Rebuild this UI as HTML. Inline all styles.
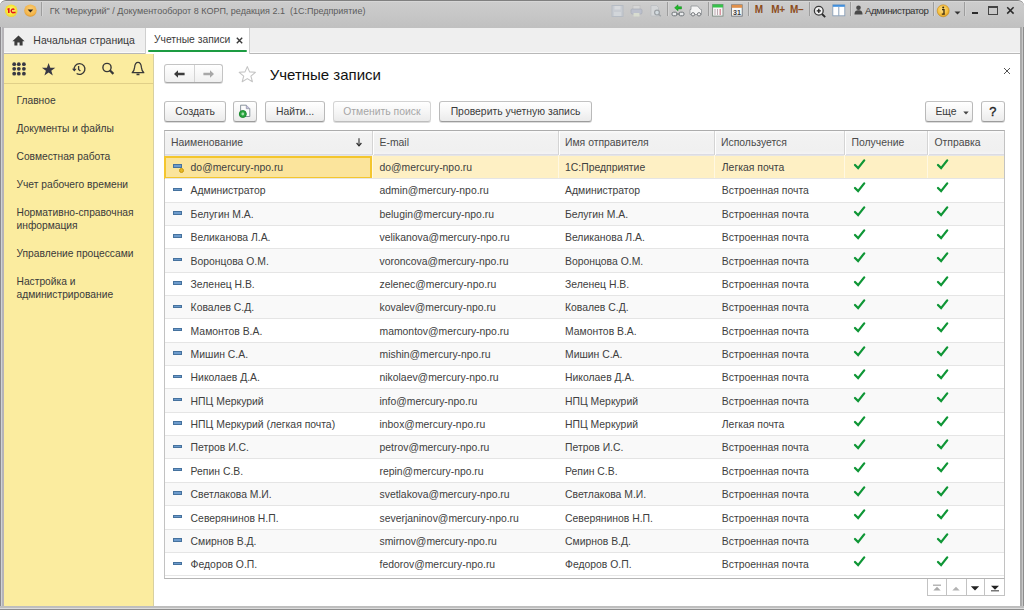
<!DOCTYPE html>
<html><head><meta charset="utf-8">
<style>
*{box-sizing:border-box;margin:0;padding:0}
html,body{width:1024px;height:610px;overflow:hidden;background:#a6a6a6;font-family:"Liberation Sans",sans-serif;color:#444}
.abs{position:absolute}
.t{position:absolute;white-space:nowrap;line-height:12px}
#title{left:0;top:0;width:1024px;height:28px;background:linear-gradient(#cdcdcd,#c7c7c7 50%,#c0c0c0);border-top:1px solid #808080;border-radius:6px 6px 0 0;box-shadow:inset 0 1px 0 #d6d6d6}
#tabs{left:3.5px;top:27.5px;width:1016.5px;height:26.5px;background:#efefef;border-bottom:1px solid #b8b8b8}
#side{left:3.5px;top:54px;width:150px;height:552px;background:#fbec9f;border-right:1px solid #d8d0a0}
#main{left:153.5px;top:54px;width:866.5px;height:552px;background:#fff}
.hdr{background:linear-gradient(#fbfbfb,#f2f2f2 3px,#f0f0f0 20px,#f4f4f6);border-bottom:1px solid #dcdce4}
.hsep{width:1px;background:#d4d4d4;box-shadow:1px 0 0 #fff}
.htx{font-size:10.4px;color:#4a4a4a}
.rtx{font-size:10.4px;color:#404040}
.selc{background:#fbe49c;border:2px solid #f4c62e}
.ic{width:9px;height:3.4px;background:#6d9bcc;border:0.8px solid #46729e}
.gold{width:5.2px;height:5.2px;border-radius:50%;background:#e6b726;border:1px solid #c8980e}
.btn{position:absolute;height:20.4px;border:1px solid #b9b9b9;border-top-color:#c2c2c2;border-bottom-color:#9c9c9c;border-radius:3px;background:linear-gradient(#ffffff,#f6f6f6 50%,#ebebeb);box-shadow:0 1px 0 #dcdcdc;font-size:10.4px;color:#3b3b3b;text-align:center;line-height:20.6px;white-space:nowrap}
.side-t{position:absolute;left:16.5px;font-size:10.25px;color:#3a3a3a;white-space:nowrap;line-height:12.4px}
</style></head><body>
<div class="abs" style="left:0;top:0;width:12px;height:10px;background:#fff"></div>
<div class="abs" style="left:1012px;top:0;width:12px;height:10px;background:#fff"></div>
<div id="title" class="abs"></div>

<svg class="abs" style="left:4px;top:3.5px" width="15" height="14" viewBox="0 0 15 14"><defs><radialGradient id="g1" cx="50%" cy="45%" r="55%"><stop offset="0" stop-color="#fffa90"/><stop offset="0.65" stop-color="#f8e838"/><stop offset="1" stop-color="#ead040"/></radialGradient></defs><circle cx="7.2" cy="6.8" r="6.3" fill="url(#g1)"/><path d="M3.5 5.5 L4.8 5 V8.9" stroke="#e5141a" stroke-width="1.6" fill="none"/><path d="M10.3 5.7 A1.75 1.75 0 1 0 9.6 8.5 H11.6" stroke="#e5141a" stroke-width="1.5" fill="none"/></svg>
<svg class="abs" style="left:22.5px;top:3.5px" width="15" height="14" viewBox="0 0 15 14"><defs><radialGradient id="g2" cx="50%" cy="40%" r="60%"><stop offset="0" stop-color="#fbd27a"/><stop offset="0.75" stop-color="#f3b44a"/><stop offset="1" stop-color="#d9962e"/></radialGradient></defs><circle cx="7.4" cy="6.6" r="6.2" fill="url(#g2)"/><path d="M4.6 5.4 H10.2 L7.4 8.6 Z" fill="#2b2118"/></svg>
<div class="abs" style="left:41px;top:1.5px;width:1px;height:14.5px;background:#9d9d9d;box-shadow:1px 0 0 #d4d4d4"></div>
<svg class="abs" style="left:611px;top:4.5px" width="13" height="12" viewBox="0 0 13 12"><rect x="1" y="0.5" width="11" height="11" fill="#c8ccd2" stroke="#b6bcc4"/><rect x="3.5" y="1" width="6" height="3.5" fill="#d8dadd"/><rect x="3" y="7" width="7" height="4" fill="#d2d6da"/></svg>
<svg class="abs" style="left:630px;top:4.5px" width="13" height="12" viewBox="0 0 13 12"><rect x="3" y="0.5" width="7" height="4" fill="#d6d6d6" stroke="#bdbdbd" stroke-width="0.6"/><rect x="1" y="4" width="11" height="5" rx="1.2" fill="#bcc0cc" stroke="#a8acb6" stroke-width="0.7"/><rect x="3.5" y="8" width="6" height="3.5" fill="#d8dcd0"/></svg>
<svg class="abs" style="left:649.5px;top:4.5px" width="12" height="12" viewBox="0 0 12 12"><path d="M1 0.5 H6.5 L8.5 2.5 V11 H1 Z" fill="#d4d6d8" stroke="#b8bcc0" stroke-width="0.7"/><circle cx="7" cy="7.6" r="2.4" fill="#d2dadf" stroke="#9da2a6" stroke-width="1.2"/><path d="M8.7 9.3 L10.8 11.2" stroke="#9da2a6" stroke-width="1.4"/></svg>
<div class="abs" style="left:666.6px;top:1.5px;width:1px;height:14.5px;background:#9d9d9d;box-shadow:1px 0 0 #d4d4d4"></div>
<svg class="abs" style="left:671px;top:3.5px" width="14" height="13" viewBox="0 0 14 13"><path d="M7 0.8 L3.6 3.8 L7 6.8 V4.9 H10.5 V2.7 H7 Z" fill="#1fb82a" stroke="#128a1a" stroke-width="0.5"/><rect x="1" y="8.2" width="5" height="3.6" rx="1.6" fill="#e8eaec" stroke="#6e7478" stroke-width="1"/><rect x="8" y="8.2" width="5" height="3.6" rx="1.6" fill="#e8eaec" stroke="#6e7478" stroke-width="1"/><path d="M5 10 H9" stroke="#6e7478" stroke-width="1"/></svg>
<svg class="abs" style="left:688.5px;top:4.5px" width="14" height="12" viewBox="0 0 14 12"><path d="M2 1 H8.5 L11.5 4.5 H12.5 V9.5 H1 V4.5 H2 Z" fill="#f4f4f4" stroke="#8e9296" stroke-width="0.8"/><circle cx="4" cy="9.3" r="1.7" fill="#eee" stroke="#6e7276" stroke-width="0.9"/><circle cx="10" cy="9.3" r="1.7" fill="#eee" stroke="#6e7276" stroke-width="0.9"/></svg>
<div class="abs" style="left:707.7px;top:1.5px;width:1px;height:14.5px;background:#9d9d9d;box-shadow:1px 0 0 #d4d4d4"></div>
<svg class="abs" style="left:711.5px;top:3.8px" width="12" height="13" viewBox="0 0 12 13"><rect x="0.6" y="0.5" width="10.4" height="11.6" fill="#f6f6f6" stroke="#7c8a80" stroke-width="0.9"/><rect x="0.6" y="0.5" width="10.4" height="3" fill="#36c24a"/><path d="M3 5 V11 M5.5 5 V11 M8.2 5 V11" stroke="#b8a0a8" stroke-width="0.9"/><path d="M8.2 5 V11" stroke="#e07a8a" stroke-width="0.9"/></svg>
<svg class="abs" style="left:730.5px;top:3.8px" width="12" height="13" viewBox="0 0 12 13"><rect x="0.6" y="0.8" width="10.6" height="11.3" fill="#fafafa" stroke="#6e747a" stroke-width="0.9"/><rect x="0.6" y="0.8" width="10.6" height="3" fill="#e0904a"/><text x="5.9" y="10.8" font-family="Liberation Sans" font-size="7.2" font-weight="bold" fill="#3c3c3c" text-anchor="middle">31</text></svg>
<div class="abs" style="left:748px;top:1.5px;width:1px;height:14.5px;background:#9d9d9d;box-shadow:1px 0 0 #d4d4d4"></div>
<div class="t" style="left:754.8px;top:4.3px;font-size:10px;font-weight:bold;color:#8c4c1c;line-height:11px">M</div>
<div class="t" style="left:771.3px;top:4.3px;font-size:10px;font-weight:bold;color:#8c4c1c;line-height:11px;letter-spacing:-0.3px">M+</div>
<div class="t" style="left:790px;top:4.3px;font-size:10px;font-weight:bold;color:#8c4c1c;line-height:11px;letter-spacing:-0.3px">M&#8211;</div>
<div class="abs" style="left:809.3px;top:1.5px;width:1px;height:14.5px;background:#9d9d9d;box-shadow:1px 0 0 #d4d4d4"></div>
<svg class="abs" style="left:812.5px;top:5px" width="14" height="13" viewBox="0 0 14 13"><circle cx="5.8" cy="5.8" r="4.4" fill="#f0f0f0" stroke="#3a3a3a" stroke-width="1.3"/><path d="M3.7 5.8 H7.9 M5.8 3.7 V7.9" stroke="#222" stroke-width="1.3"/><path d="M9 9 L12.2 12.2" stroke="#2a2a2a" stroke-width="1.8"/></svg>
<svg class="abs" style="left:831.5px;top:3.8px" width="14" height="13" viewBox="0 0 14 13"><rect x="0.8" y="0.8" width="12" height="11" fill="#fff" stroke="#8aa0b8" stroke-width="0.9"/><rect x="0.8" y="0.8" width="12" height="2" fill="#3f8edc"/><path d="M6.8 3 V11.8" stroke="#8aa0b8" stroke-width="1"/></svg>
<div class="abs" style="left:849.8px;top:1.5px;width:1px;height:14.5px;background:#9d9d9d;box-shadow:1px 0 0 #d4d4d4"></div>
<svg class="abs" style="left:854px;top:4.8px" width="9" height="10" viewBox="0 0 9 10"><circle cx="4.5" cy="2.8" r="2.3" fill="#4a4a4a"/><path d="M0.5 9.5 C0.5 6 2 5.2 4.5 5.2 C7 5.2 8.5 6 8.5 9.5 Z" fill="#4a4a4a"/></svg>
<div class="t" style="left:865px;top:4.5px;font-size:9.6px;color:#303030;line-height:11px;letter-spacing:-0.45px">Администратор</div>
<div class="abs" style="left:932.6px;top:1.5px;width:1px;height:14.5px;background:#9d9d9d;box-shadow:1px 0 0 #d4d4d4"></div>
<svg class="abs" style="left:935.5px;top:3.6px" width="15" height="14" viewBox="0 0 15 14"><defs><radialGradient id="g3" cx="45%" cy="40%" r="60%"><stop offset="0" stop-color="#fde08a"/><stop offset="0.7" stop-color="#f5bf3c"/><stop offset="1" stop-color="#d99a20"/></radialGradient></defs><circle cx="7.2" cy="6.8" r="6" fill="url(#g3)" stroke="#c88a1a" stroke-width="0.6"/><circle cx="7.2" cy="3.6" r="1" fill="#3a2a10"/><path d="M6 5.6 H8 V10.2 H8.8 M5.8 10.2 H8.6" stroke="#3a2a10" stroke-width="1.3" fill="none"/></svg>
<svg class="abs" style="left:953.8px;top:11.2px" width="7" height="4" viewBox="0 0 7 4"><path d="M0.5 0.5 H6.5 L3.5 3.5 Z" fill="#333"/></svg>
<div class="abs" style="left:964px;top:1.5px;width:1px;height:14.5px;background:#9d9d9d;box-shadow:1px 0 0 #d4d4d4"></div>
<div class="abs" style="left:971.6px;top:11.8px;width:6.8px;height:1.9px;background:#2a2a2a"></div>
<div class="abs" style="left:987.5px;top:6px;width:10px;height:9px;border:1.3px solid #444;border-top-width:2px"></div>
<svg class="abs" style="left:1006.3px;top:5.9px" width="9" height="9" viewBox="0 0 9 9"><path d="M1.2 1.2 L7.6 7.6 M7.6 1.2 L1.2 7.6" stroke="#2a2a2a" stroke-width="1.5"/></svg>

<div class="t" style="left:49.7px;top:5px;font-size:9px;color:#5c5c5c;line-height:12px">ГК "Меркурий" / Документооборот 8 КОРП, редакция 2.1&nbsp; (1С:Предприятие)</div>
<div class="abs" style="left:0;top:27px;width:3.5px;height:583px;background:linear-gradient(90deg,#8c8a8e 0,#8c8a8e 1px,#d0d2d4 1px,#d0d2d4 2px,#b6b4b8 2px)"></div>
<div class="abs" style="left:1020px;top:27px;width:4px;height:583px;background:linear-gradient(90deg,#a8a8a8 0,#acacac 2px,#c8c8c8 2px,#c8c8c8 3px,#8c8c8c 3px)"></div>
<div id="tabs" class="abs"></div>
<div class="abs" style="left:3.5px;top:52px;width:1016.5px;height:1px;background:#fafafa"></div>
<div class="abs" style="left:145.4px;top:28px;width:104.4px;height:25.5px;background:#fff;border-left:1px solid #cfcfcf;border-right:1px solid #cfcfcf"></div>
<div class="abs" style="left:148px;top:50.2px;width:99px;height:2.1px;background:#1d9c42;border-radius:1px"></div>
<svg class="abs" style="left:12px;top:34.5px" width="13" height="11" viewBox="0 0 13 11"><path d="M6.5 0.6 L12.6 6.2 H10.6 V10.6 H7.6 V7.4 H5.4 V10.6 H2.4 V6.2 H0.4 Z" fill="#3c3c3c"/></svg>
<div class="t" style="left:33.3px;top:33.5px;font-size:10.5px;color:#3a3a3a">Начальная страница</div>
<div class="t" style="left:154px;top:34.4px;font-size:10.3px;color:#3a3a3a">Учетные записи</div>
<svg class="abs" style="left:236.3px;top:37px" width="7" height="7" viewBox="0 0 7 7"><path d="M0.8 0.8 L6.2 6.2 M6.2 0.8 L0.8 6.2" stroke="#3a3a3a" stroke-width="1.4"/></svg>
<div id="side" class="abs"></div>
<div class="abs" style="left:3.5px;top:83px;width:149.5px;height:1px;background:#e0cf88"></div>

<svg class="abs" style="left:10px;top:60px" width="18" height="18" viewBox="0 0 18 18">
<g fill="#383844"><circle cx="4.2" cy="4.2" r="1.9"/><circle cx="8.8" cy="4.2" r="1.9"/><circle cx="13.9" cy="4.2" r="1.9"/><circle cx="4.2" cy="8.8" r="1.9"/><circle cx="8.8" cy="8.8" r="1.9"/><circle cx="13.9" cy="8.8" r="1.9"/><circle cx="4.2" cy="13.7" r="1.9"/><circle cx="8.8" cy="13.7" r="1.9"/><circle cx="13.9" cy="13.7" r="1.9"/></g></svg>
<svg class="abs" style="left:40px;top:61px" width="17" height="16" viewBox="0 0 17 16"><path d="M8.6 2.0 L10.3 6.8 L15.3 6.8 L11.3 9.8 L12.8 14.6 L8.6 11.6 L4.4 14.6 L5.9 9.8 L1.9 6.8 L6.9 6.8 Z" fill="#383844"/></svg>
<svg class="abs" style="left:70.5px;top:61px" width="16" height="16" viewBox="0 0 16 16"><path d="M3.3 9.3 A5.4 5.4 0 1 1 5.6 12.5" fill="none" stroke="#383838" stroke-width="1.3"/><path d="M1 7.8 L3.4 10.6 L5.6 7.8 Z" fill="#383844"/><path d="M7.6 5 V8.4 L9.4 10" fill="none" stroke="#383838" stroke-width="1.3"/></svg>
<svg class="abs" style="left:99px;top:60px" width="17" height="17" viewBox="0 0 17 17"><circle cx="8" cy="7.5" r="4.1" fill="none" stroke="#383838" stroke-width="1.4"/><path d="M10.8 10.3 L14.4 13.9" stroke="#383838" stroke-width="2.2"/></svg>
<svg class="abs" style="left:129px;top:60px" width="18" height="18" viewBox="0 0 18 18"><path d="M3.2 12.7 H14.8 C13.1 11.1 12.6 9.6 12.4 7.4 C12.2 4.4 10.9 2.3 9 2.3 C7.1 2.3 5.8 4.4 5.6 7.4 C5.4 9.6 4.9 11.1 3.2 12.7 Z" fill="none" stroke="#383838" stroke-width="1.25" stroke-linejoin="round"/><path d="M7.5 14.4 H10.5" stroke="#383838" stroke-width="1.7"/></svg>

<div class="side-t" style="top:94.8px">Главное</div>
<div class="side-t" style="top:122.8px">Документы и файлы</div>
<div class="side-t" style="top:150.8px">Совместная работа</div>
<div class="side-t" style="top:178.8px">Учет рабочего времени</div>
<div class="side-t" style="top:207.3px">Нормативно-справочная<br>информация</div>
<div class="side-t" style="top:248.3px">Управление процессами</div>
<div class="side-t" style="top:276.3px">Настройка и<br>администрирование</div>
<div id="main" class="abs"></div>
<div class="abs" style="left:164px;top:63.9px;width:58.5px;height:19px;border:1px solid #c4c4c4;border-bottom-color:#a8a8a8;border-radius:3px;background:linear-gradient(#fff,#f0f0f0);box-shadow:0 1px 0 #dcdcdc"></div>
<div class="abs" style="left:193.5px;top:64.5px;width:1px;height:17.5px;background:#d4d4d4"></div>
<svg class="abs" style="left:173px;top:69px" width="13" height="10" viewBox="0 0 13 10"><path d="M1 5 L5 1.2 V3.8 H11.6 V6.2 H5 V8.8 Z" fill="#3c3c3c"/></svg>
<svg class="abs" style="left:201.5px;top:69px" width="13" height="10" viewBox="0 0 13 10"><path d="M12 5 L8 1.2 V3.8 H1.4 V6.2 H8 V8.8 Z" fill="#a8a8a8"/></svg>
<svg class="abs" style="left:236.5px;top:65px" width="21" height="19" viewBox="0 0 21 19"><path d="M10.3 1.6 L12.6 6.9 L18.4 7.3 L13.9 11.1 L15.4 16.7 L10.3 13.6 L5.2 16.7 L6.7 11.1 L2.2 7.3 L8 6.9 Z" fill="#fff" stroke="#c4c4c4" stroke-width="1.1" stroke-linejoin="round"/></svg>
<div class="t" style="left:269.7px;top:66.2px;font-size:15px;color:#111;line-height:17px">Учетные записи</div>
<svg class="abs" style="left:1002.6px;top:66.8px" width="8" height="8" viewBox="0 0 8 8"><path d="M1 1 L7 7 M7 1 L1 7" stroke="#555" stroke-width="1"/></svg>
<div class="btn" style="left:164.2px;top:101.3px;width:61.8px">Создать</div>
<div class="btn" style="left:233.1px;top:101.3px;width:24.3px"></div>
<svg class="abs" style="left:238px;top:104px" width="14" height="14" viewBox="0 0 14 14"><path d="M2.6 1.2 H8.3 L11.8 4.7 V12.5 H2.6 Z" fill="#fcfcfc" stroke="#7e8a94" stroke-width="0.9"/><path d="M8.3 1.2 V4.7 H11.8" fill="#c8c0e0" stroke="#8890a0" stroke-width="0.7"/><circle cx="4.8" cy="10" r="3.5" fill="#2aa640" stroke="#1c8a30" stroke-width="1"/><circle cx="4.8" cy="10" r="1.4" fill="#a6e0ae"/></svg>
<div class="btn" style="left:264.7px;top:101.3px;width:60.8px">Найти...</div>
<div class="btn" style="left:332.5px;top:101.3px;width:98.7px;color:#a6a6a6;border-color:#d4d4d4;border-bottom-color:#bdbdbd">Отменить поиск</div>
<div class="btn" style="left:439.1px;top:101.3px;width:153px">Проверить учетную запись</div>
<div class="btn" style="left:924.6px;top:101.3px;width:48.6px;text-align:left;padding-left:9.8px;line-height:20.4px">Еще</div>
<svg class="abs" style="left:963px;top:110.5px" width="6" height="4" viewBox="0 0 6 4"><path d="M0.3 0.5 H5.7 L3 3.5 Z" fill="#444"/></svg>
<div class="btn" style="left:980.7px;top:101.3px;width:24px;font-size:12.8px;color:#222;line-height:20px;-webkit-text-stroke:0.35px #222">?</div>
<div class="abs" style="left:153.5px;top:127.5px;width:866.5px;height:0px"></div>
<div class="abs" style="left:163.8px;top:129.8px;width:841.5px;height:448.78px;border:1px solid #c2c2c2;border-top-color:#acacac;border-bottom-color:#b4b4b4;background:#fff"></div>
<div class="abs hdr" style="left:164.8px;top:130.8px;width:839.5px;height:24px"></div>
<div class="t htx" style="left:171px;top:136.8px">Наименование</div>
<div class="t htx" style="left:379.5px;top:136.8px">E-mail</div>
<div class="t htx" style="left:565px;top:136.8px">Имя отправителя</div>
<div class="t htx" style="left:721px;top:136.8px">Используется</div>
<div class="t htx" style="left:851.5px;top:136.8px">Получение</div>
<div class="t htx" style="left:934.5px;top:136.8px">Отправка</div>
<div class="abs hsep" style="left:372px;top:130.8px;height:24px"></div>
<div class="abs hsep" style="left:558px;top:130.8px;height:24px"></div>
<div class="abs hsep" style="left:714px;top:130.8px;height:24px"></div>
<div class="abs hsep" style="left:844px;top:130.8px;height:24px"></div>
<div class="abs hsep" style="left:927px;top:130.8px;height:24px"></div>
<svg class="abs" style="left:354.5px;top:137.8px" width="8" height="9" viewBox="0 0 8 9"><path d="M4 0.3 V7.5" stroke="#2c2c2c" stroke-width="1.1"/><path d="M1.6 5 L4 7.8 L6.4 5" fill="none" stroke="#2c2c2c" stroke-width="1.2"/></svg>
<div class="abs" style="left:164.8px;top:154.8px;width:839.5px;height:23.36px;background:#fef0c4;border-top:1px solid #e5e5e5"></div>
<div class="abs selc" style="left:163.8px;top:155.9px;width:208.2px;height:23.26px"></div>
<div class="abs" style="left:372px;top:154.8px;width:1px;height:23.36px;background:#fff8e2"></div>
<div class="abs" style="left:558px;top:154.8px;width:1px;height:23.36px;background:#fff8e2"></div>
<div class="abs" style="left:714px;top:154.8px;width:1px;height:23.36px;background:#fff8e2"></div>
<div class="abs" style="left:844px;top:154.8px;width:1px;height:23.36px;background:#fff8e2"></div>
<div class="abs" style="left:927px;top:154.8px;width:1px;height:23.36px;background:#fff8e2"></div>
<div class="abs ic" style="left:173px;top:164.4px"></div><div class="abs gold" style="left:178.7px;top:167.9px"></div>
<div class="t rtx" style="left:190.6px;top:162.1px">do@mercury-npo.ru</div>
<div class="t rtx" style="left:379.5px;top:162.1px">do@mercury-npo.ru</div>
<div class="t rtx" style="left:565px;top:162.1px">1С:Предприятие</div>
<div class="t rtx" style="left:721.8px;top:162.1px">Легкая почта</div>
<div class="abs" style="left:852px;top:156.8px;width:15px;height:13px"><svg width="15" height="13" viewBox="0 0 15 13"><path d="M3.0 7.0 L6.1 10.1 L12.2 2.4" fill="none" stroke="#0f9636" stroke-width="2.3" stroke-linecap="round"/></svg></div>
<div class="abs" style="left:935px;top:156.8px;width:15px;height:13px"><svg width="15" height="13" viewBox="0 0 15 13"><path d="M3.0 7.0 L6.1 10.1 L12.2 2.4" fill="none" stroke="#0f9636" stroke-width="2.3" stroke-linecap="round"/></svg></div>
<div class="abs" style="left:164.8px;top:178.16px;width:839.5px;height:23.36px;background:#ffffff;border-top:1px solid #e5e5e5"></div>
<div class="abs ic" style="left:173px;top:187.76px"></div>
<div class="t rtx" style="left:190.6px;top:185.46px">Администратор</div>
<div class="t rtx" style="left:379.5px;top:185.46px">admin@mercury-npo.ru</div>
<div class="t rtx" style="left:565px;top:185.46px">Администратор</div>
<div class="t rtx" style="left:721.8px;top:185.46px">Встроенная почта</div>
<div class="abs" style="left:852px;top:180.16px;width:15px;height:13px"><svg width="15" height="13" viewBox="0 0 15 13"><path d="M3.0 7.0 L6.1 10.1 L12.2 2.4" fill="none" stroke="#0f9636" stroke-width="2.3" stroke-linecap="round"/></svg></div>
<div class="abs" style="left:935px;top:180.16px;width:15px;height:13px"><svg width="15" height="13" viewBox="0 0 15 13"><path d="M3.0 7.0 L6.1 10.1 L12.2 2.4" fill="none" stroke="#0f9636" stroke-width="2.3" stroke-linecap="round"/></svg></div>
<div class="abs" style="left:164.8px;top:201.52px;width:839.5px;height:23.36px;background:#f9f9f9;border-top:1px solid #e5e5e5"></div>
<div class="abs ic" style="left:173px;top:211.12px"></div>
<div class="t rtx" style="left:190.6px;top:208.82px">Белугин М.А.</div>
<div class="t rtx" style="left:379.5px;top:208.82px">belugin@mercury-npo.ru</div>
<div class="t rtx" style="left:565px;top:208.82px">Белугин М.А.</div>
<div class="t rtx" style="left:721.8px;top:208.82px">Встроенная почта</div>
<div class="abs" style="left:852px;top:203.52px;width:15px;height:13px"><svg width="15" height="13" viewBox="0 0 15 13"><path d="M3.0 7.0 L6.1 10.1 L12.2 2.4" fill="none" stroke="#0f9636" stroke-width="2.3" stroke-linecap="round"/></svg></div>
<div class="abs" style="left:935px;top:203.52px;width:15px;height:13px"><svg width="15" height="13" viewBox="0 0 15 13"><path d="M3.0 7.0 L6.1 10.1 L12.2 2.4" fill="none" stroke="#0f9636" stroke-width="2.3" stroke-linecap="round"/></svg></div>
<div class="abs" style="left:164.8px;top:224.88px;width:839.5px;height:23.36px;background:#ffffff;border-top:1px solid #e5e5e5"></div>
<div class="abs ic" style="left:173px;top:234.48px"></div>
<div class="t rtx" style="left:190.6px;top:232.18px">Великанова Л.А.</div>
<div class="t rtx" style="left:379.5px;top:232.18px">velikanova@mercury-npo.ru</div>
<div class="t rtx" style="left:565px;top:232.18px">Великанова Л.А.</div>
<div class="t rtx" style="left:721.8px;top:232.18px">Встроенная почта</div>
<div class="abs" style="left:852px;top:226.88px;width:15px;height:13px"><svg width="15" height="13" viewBox="0 0 15 13"><path d="M3.0 7.0 L6.1 10.1 L12.2 2.4" fill="none" stroke="#0f9636" stroke-width="2.3" stroke-linecap="round"/></svg></div>
<div class="abs" style="left:935px;top:226.88px;width:15px;height:13px"><svg width="15" height="13" viewBox="0 0 15 13"><path d="M3.0 7.0 L6.1 10.1 L12.2 2.4" fill="none" stroke="#0f9636" stroke-width="2.3" stroke-linecap="round"/></svg></div>
<div class="abs" style="left:164.8px;top:248.24px;width:839.5px;height:23.36px;background:#f9f9f9;border-top:1px solid #e5e5e5"></div>
<div class="abs ic" style="left:173px;top:257.84px"></div>
<div class="t rtx" style="left:190.6px;top:255.54px">Воронцова О.М.</div>
<div class="t rtx" style="left:379.5px;top:255.54px">voroncova@mercury-npo.ru</div>
<div class="t rtx" style="left:565px;top:255.54px">Воронцова О.М.</div>
<div class="t rtx" style="left:721.8px;top:255.54px">Встроенная почта</div>
<div class="abs" style="left:852px;top:250.24px;width:15px;height:13px"><svg width="15" height="13" viewBox="0 0 15 13"><path d="M3.0 7.0 L6.1 10.1 L12.2 2.4" fill="none" stroke="#0f9636" stroke-width="2.3" stroke-linecap="round"/></svg></div>
<div class="abs" style="left:935px;top:250.24px;width:15px;height:13px"><svg width="15" height="13" viewBox="0 0 15 13"><path d="M3.0 7.0 L6.1 10.1 L12.2 2.4" fill="none" stroke="#0f9636" stroke-width="2.3" stroke-linecap="round"/></svg></div>
<div class="abs" style="left:164.8px;top:271.6px;width:839.5px;height:23.36px;background:#ffffff;border-top:1px solid #e5e5e5"></div>
<div class="abs ic" style="left:173px;top:281.2px"></div>
<div class="t rtx" style="left:190.6px;top:278.9px">Зеленец Н.В.</div>
<div class="t rtx" style="left:379.5px;top:278.9px">zelenec@mercury-npo.ru</div>
<div class="t rtx" style="left:565px;top:278.9px">Зеленец Н.В.</div>
<div class="t rtx" style="left:721.8px;top:278.9px">Встроенная почта</div>
<div class="abs" style="left:852px;top:273.6px;width:15px;height:13px"><svg width="15" height="13" viewBox="0 0 15 13"><path d="M3.0 7.0 L6.1 10.1 L12.2 2.4" fill="none" stroke="#0f9636" stroke-width="2.3" stroke-linecap="round"/></svg></div>
<div class="abs" style="left:935px;top:273.6px;width:15px;height:13px"><svg width="15" height="13" viewBox="0 0 15 13"><path d="M3.0 7.0 L6.1 10.1 L12.2 2.4" fill="none" stroke="#0f9636" stroke-width="2.3" stroke-linecap="round"/></svg></div>
<div class="abs" style="left:164.8px;top:294.96px;width:839.5px;height:23.36px;background:#f9f9f9;border-top:1px solid #e5e5e5"></div>
<div class="abs ic" style="left:173px;top:304.56px"></div>
<div class="t rtx" style="left:190.6px;top:302.26px">Ковалев С.Д.</div>
<div class="t rtx" style="left:379.5px;top:302.26px">kovalev@mercury-npo.ru</div>
<div class="t rtx" style="left:565px;top:302.26px">Ковалев С.Д.</div>
<div class="t rtx" style="left:721.8px;top:302.26px">Встроенная почта</div>
<div class="abs" style="left:852px;top:296.96px;width:15px;height:13px"><svg width="15" height="13" viewBox="0 0 15 13"><path d="M3.0 7.0 L6.1 10.1 L12.2 2.4" fill="none" stroke="#0f9636" stroke-width="2.3" stroke-linecap="round"/></svg></div>
<div class="abs" style="left:935px;top:296.96px;width:15px;height:13px"><svg width="15" height="13" viewBox="0 0 15 13"><path d="M3.0 7.0 L6.1 10.1 L12.2 2.4" fill="none" stroke="#0f9636" stroke-width="2.3" stroke-linecap="round"/></svg></div>
<div class="abs" style="left:164.8px;top:318.32px;width:839.5px;height:23.36px;background:#ffffff;border-top:1px solid #e5e5e5"></div>
<div class="abs ic" style="left:173px;top:327.92px"></div>
<div class="t rtx" style="left:190.6px;top:325.62px">Мамонтов В.А.</div>
<div class="t rtx" style="left:379.5px;top:325.62px">mamontov@mercury-npo.ru</div>
<div class="t rtx" style="left:565px;top:325.62px">Мамонтов В.А.</div>
<div class="t rtx" style="left:721.8px;top:325.62px">Встроенная почта</div>
<div class="abs" style="left:852px;top:320.32px;width:15px;height:13px"><svg width="15" height="13" viewBox="0 0 15 13"><path d="M3.0 7.0 L6.1 10.1 L12.2 2.4" fill="none" stroke="#0f9636" stroke-width="2.3" stroke-linecap="round"/></svg></div>
<div class="abs" style="left:935px;top:320.32px;width:15px;height:13px"><svg width="15" height="13" viewBox="0 0 15 13"><path d="M3.0 7.0 L6.1 10.1 L12.2 2.4" fill="none" stroke="#0f9636" stroke-width="2.3" stroke-linecap="round"/></svg></div>
<div class="abs" style="left:164.8px;top:341.68px;width:839.5px;height:23.36px;background:#f9f9f9;border-top:1px solid #e5e5e5"></div>
<div class="abs ic" style="left:173px;top:351.28px"></div>
<div class="t rtx" style="left:190.6px;top:348.98px">Мишин С.А.</div>
<div class="t rtx" style="left:379.5px;top:348.98px">mishin@mercury-npo.ru</div>
<div class="t rtx" style="left:565px;top:348.98px">Мишин С.А.</div>
<div class="t rtx" style="left:721.8px;top:348.98px">Встроенная почта</div>
<div class="abs" style="left:852px;top:343.68px;width:15px;height:13px"><svg width="15" height="13" viewBox="0 0 15 13"><path d="M3.0 7.0 L6.1 10.1 L12.2 2.4" fill="none" stroke="#0f9636" stroke-width="2.3" stroke-linecap="round"/></svg></div>
<div class="abs" style="left:935px;top:343.68px;width:15px;height:13px"><svg width="15" height="13" viewBox="0 0 15 13"><path d="M3.0 7.0 L6.1 10.1 L12.2 2.4" fill="none" stroke="#0f9636" stroke-width="2.3" stroke-linecap="round"/></svg></div>
<div class="abs" style="left:164.8px;top:365.04px;width:839.5px;height:23.36px;background:#ffffff;border-top:1px solid #e5e5e5"></div>
<div class="abs ic" style="left:173px;top:374.64px"></div>
<div class="t rtx" style="left:190.6px;top:372.34px">Николаев Д.А.</div>
<div class="t rtx" style="left:379.5px;top:372.34px">nikolaev@mercury-npo.ru</div>
<div class="t rtx" style="left:565px;top:372.34px">Николаев Д.А.</div>
<div class="t rtx" style="left:721.8px;top:372.34px">Встроенная почта</div>
<div class="abs" style="left:852px;top:367.04px;width:15px;height:13px"><svg width="15" height="13" viewBox="0 0 15 13"><path d="M3.0 7.0 L6.1 10.1 L12.2 2.4" fill="none" stroke="#0f9636" stroke-width="2.3" stroke-linecap="round"/></svg></div>
<div class="abs" style="left:935px;top:367.04px;width:15px;height:13px"><svg width="15" height="13" viewBox="0 0 15 13"><path d="M3.0 7.0 L6.1 10.1 L12.2 2.4" fill="none" stroke="#0f9636" stroke-width="2.3" stroke-linecap="round"/></svg></div>
<div class="abs" style="left:164.8px;top:388.4px;width:839.5px;height:23.36px;background:#f9f9f9;border-top:1px solid #e5e5e5"></div>
<div class="abs ic" style="left:173px;top:398px"></div>
<div class="t rtx" style="left:190.6px;top:395.7px">НПЦ Меркурий</div>
<div class="t rtx" style="left:379.5px;top:395.7px">info@mercury-npo.ru</div>
<div class="t rtx" style="left:565px;top:395.7px">НПЦ Меркурий</div>
<div class="t rtx" style="left:721.8px;top:395.7px">Встроенная почта</div>
<div class="abs" style="left:852px;top:390.4px;width:15px;height:13px"><svg width="15" height="13" viewBox="0 0 15 13"><path d="M3.0 7.0 L6.1 10.1 L12.2 2.4" fill="none" stroke="#0f9636" stroke-width="2.3" stroke-linecap="round"/></svg></div>
<div class="abs" style="left:935px;top:390.4px;width:15px;height:13px"><svg width="15" height="13" viewBox="0 0 15 13"><path d="M3.0 7.0 L6.1 10.1 L12.2 2.4" fill="none" stroke="#0f9636" stroke-width="2.3" stroke-linecap="round"/></svg></div>
<div class="abs" style="left:164.8px;top:411.76px;width:839.5px;height:23.36px;background:#ffffff;border-top:1px solid #e5e5e5"></div>
<div class="abs ic" style="left:173px;top:421.36px"></div>
<div class="t rtx" style="left:190.6px;top:419.06px">НПЦ Меркурий (легкая почта)</div>
<div class="t rtx" style="left:379.5px;top:419.06px">inbox@mercury-npo.ru</div>
<div class="t rtx" style="left:565px;top:419.06px">НПЦ Меркурий</div>
<div class="t rtx" style="left:721.8px;top:419.06px">Легкая почта</div>
<div class="abs" style="left:852px;top:413.76px;width:15px;height:13px"><svg width="15" height="13" viewBox="0 0 15 13"><path d="M3.0 7.0 L6.1 10.1 L12.2 2.4" fill="none" stroke="#0f9636" stroke-width="2.3" stroke-linecap="round"/></svg></div>
<div class="abs" style="left:935px;top:413.76px;width:15px;height:13px"><svg width="15" height="13" viewBox="0 0 15 13"><path d="M3.0 7.0 L6.1 10.1 L12.2 2.4" fill="none" stroke="#0f9636" stroke-width="2.3" stroke-linecap="round"/></svg></div>
<div class="abs" style="left:164.8px;top:435.12px;width:839.5px;height:23.36px;background:#f9f9f9;border-top:1px solid #e5e5e5"></div>
<div class="abs ic" style="left:173px;top:444.72px"></div>
<div class="t rtx" style="left:190.6px;top:442.42px">Петров И.С.</div>
<div class="t rtx" style="left:379.5px;top:442.42px">petrov@mercury-npo.ru</div>
<div class="t rtx" style="left:565px;top:442.42px">Петров И.С.</div>
<div class="t rtx" style="left:721.8px;top:442.42px">Встроенная почта</div>
<div class="abs" style="left:852px;top:437.12px;width:15px;height:13px"><svg width="15" height="13" viewBox="0 0 15 13"><path d="M3.0 7.0 L6.1 10.1 L12.2 2.4" fill="none" stroke="#0f9636" stroke-width="2.3" stroke-linecap="round"/></svg></div>
<div class="abs" style="left:935px;top:437.12px;width:15px;height:13px"><svg width="15" height="13" viewBox="0 0 15 13"><path d="M3.0 7.0 L6.1 10.1 L12.2 2.4" fill="none" stroke="#0f9636" stroke-width="2.3" stroke-linecap="round"/></svg></div>
<div class="abs" style="left:164.8px;top:458.48px;width:839.5px;height:23.36px;background:#ffffff;border-top:1px solid #e5e5e5"></div>
<div class="abs ic" style="left:173px;top:468.08px"></div>
<div class="t rtx" style="left:190.6px;top:465.78px">Репин С.В.</div>
<div class="t rtx" style="left:379.5px;top:465.78px">repin@mercury-npo.ru</div>
<div class="t rtx" style="left:565px;top:465.78px">Репин С.В.</div>
<div class="t rtx" style="left:721.8px;top:465.78px">Встроенная почта</div>
<div class="abs" style="left:852px;top:460.48px;width:15px;height:13px"><svg width="15" height="13" viewBox="0 0 15 13"><path d="M3.0 7.0 L6.1 10.1 L12.2 2.4" fill="none" stroke="#0f9636" stroke-width="2.3" stroke-linecap="round"/></svg></div>
<div class="abs" style="left:935px;top:460.48px;width:15px;height:13px"><svg width="15" height="13" viewBox="0 0 15 13"><path d="M3.0 7.0 L6.1 10.1 L12.2 2.4" fill="none" stroke="#0f9636" stroke-width="2.3" stroke-linecap="round"/></svg></div>
<div class="abs" style="left:164.8px;top:481.84px;width:839.5px;height:23.36px;background:#f9f9f9;border-top:1px solid #e5e5e5"></div>
<div class="abs ic" style="left:173px;top:491.44px"></div>
<div class="t rtx" style="left:190.6px;top:489.14px">Светлакова М.И.</div>
<div class="t rtx" style="left:379.5px;top:489.14px">svetlakova@mercury-npo.ru</div>
<div class="t rtx" style="left:565px;top:489.14px">Светлакова М.И.</div>
<div class="t rtx" style="left:721.8px;top:489.14px">Встроенная почта</div>
<div class="abs" style="left:852px;top:483.84px;width:15px;height:13px"><svg width="15" height="13" viewBox="0 0 15 13"><path d="M3.0 7.0 L6.1 10.1 L12.2 2.4" fill="none" stroke="#0f9636" stroke-width="2.3" stroke-linecap="round"/></svg></div>
<div class="abs" style="left:935px;top:483.84px;width:15px;height:13px"><svg width="15" height="13" viewBox="0 0 15 13"><path d="M3.0 7.0 L6.1 10.1 L12.2 2.4" fill="none" stroke="#0f9636" stroke-width="2.3" stroke-linecap="round"/></svg></div>
<div class="abs" style="left:164.8px;top:505.2px;width:839.5px;height:23.36px;background:#ffffff;border-top:1px solid #e5e5e5"></div>
<div class="abs ic" style="left:173px;top:514.8px"></div>
<div class="t rtx" style="left:190.6px;top:512.5px">Северянинов Н.П.</div>
<div class="t rtx" style="left:379.5px;top:512.5px">severjaninov@mercury-npo.ru</div>
<div class="t rtx" style="left:565px;top:512.5px">Северянинов Н.П.</div>
<div class="t rtx" style="left:721.8px;top:512.5px">Встроенная почта</div>
<div class="abs" style="left:852px;top:507.2px;width:15px;height:13px"><svg width="15" height="13" viewBox="0 0 15 13"><path d="M3.0 7.0 L6.1 10.1 L12.2 2.4" fill="none" stroke="#0f9636" stroke-width="2.3" stroke-linecap="round"/></svg></div>
<div class="abs" style="left:935px;top:507.2px;width:15px;height:13px"><svg width="15" height="13" viewBox="0 0 15 13"><path d="M3.0 7.0 L6.1 10.1 L12.2 2.4" fill="none" stroke="#0f9636" stroke-width="2.3" stroke-linecap="round"/></svg></div>
<div class="abs" style="left:164.8px;top:528.56px;width:839.5px;height:23.36px;background:#f9f9f9;border-top:1px solid #e5e5e5"></div>
<div class="abs ic" style="left:173px;top:538.16px"></div>
<div class="t rtx" style="left:190.6px;top:535.86px">Смирнов В.Д.</div>
<div class="t rtx" style="left:379.5px;top:535.86px">smirnov@mercury-npo.ru</div>
<div class="t rtx" style="left:565px;top:535.86px">Смирнов В.Д.</div>
<div class="t rtx" style="left:721.8px;top:535.86px">Встроенная почта</div>
<div class="abs" style="left:852px;top:530.56px;width:15px;height:13px"><svg width="15" height="13" viewBox="0 0 15 13"><path d="M3.0 7.0 L6.1 10.1 L12.2 2.4" fill="none" stroke="#0f9636" stroke-width="2.3" stroke-linecap="round"/></svg></div>
<div class="abs" style="left:935px;top:530.56px;width:15px;height:13px"><svg width="15" height="13" viewBox="0 0 15 13"><path d="M3.0 7.0 L6.1 10.1 L12.2 2.4" fill="none" stroke="#0f9636" stroke-width="2.3" stroke-linecap="round"/></svg></div>
<div class="abs" style="left:164.8px;top:551.92px;width:839.5px;height:23.36px;background:#ffffff;border-top:1px solid #e5e5e5"></div>
<div class="abs ic" style="left:173px;top:561.52px"></div>
<div class="t rtx" style="left:190.6px;top:559.22px">Федоров О.П.</div>
<div class="t rtx" style="left:379.5px;top:559.22px">fedorov@mercury-npo.ru</div>
<div class="t rtx" style="left:565px;top:559.22px">Федоров О.П.</div>
<div class="t rtx" style="left:721.8px;top:559.22px">Встроенная почта</div>
<div class="abs" style="left:852px;top:553.92px;width:15px;height:13px"><svg width="15" height="13" viewBox="0 0 15 13"><path d="M3.0 7.0 L6.1 10.1 L12.2 2.4" fill="none" stroke="#0f9636" stroke-width="2.3" stroke-linecap="round"/></svg></div>
<div class="abs" style="left:935px;top:553.92px;width:15px;height:13px"><svg width="15" height="13" viewBox="0 0 15 13"><path d="M3.0 7.0 L6.1 10.1 L12.2 2.4" fill="none" stroke="#0f9636" stroke-width="2.3" stroke-linecap="round"/></svg></div>
<div class="abs" style="left:164.8px;top:575.28px;width:839.5px;height:1px;background:#e6e6e6"></div>
<div class="abs" style="left:926.6px;top:578.58px;width:78.7px;height:17.4px;border:1px solid #c3c3c3;border-top:none;background:#fff"></div>
<div class="abs" style="left:946.4px;top:578.58px;width:1px;height:17.4px;background:#c3c3c3"></div>
<div class="abs" style="left:965.5px;top:578.58px;width:1px;height:17.4px;background:#c3c3c3"></div>
<div class="abs" style="left:984.4px;top:578.58px;width:1px;height:17.4px;background:#c3c3c3"></div>
<svg class="abs" style="left:931.5px;top:583.58px" width="10" height="8" viewBox="0 0 10 8"><path d="M1 1.2 H9" stroke="#aaa" stroke-width="1.3"/><path d="M1.3 6.5 L5 2.8 L8.7 6.5 Z" fill="#aaa"/></svg>
<svg class="abs" style="left:950.95px;top:583.58px" width="10" height="8" viewBox="0 0 10 8"><path d="M1.3 6.5 L5 2.8 L8.7 6.5 Z" fill="#b3b3b3"/></svg>
<svg class="abs" style="left:969.95px;top:583.58px" width="10" height="8" viewBox="0 0 10 8"><path d="M0.8 2.3 L5 6.5 L9.2 2.3 Z" fill="#222"/></svg>
<svg class="abs" style="left:989.85px;top:583.58px" width="10" height="8" viewBox="0 0 10 8"><path d="M1 1.8 L5 5.8 L9 1.8 Z" fill="#222"/><path d="M1 6.8 H9" stroke="#555" stroke-width="1.2"/></svg>
<div class="abs" style="left:0;top:605.5px;width:1024px;height:4.5px;background:linear-gradient(#bdbdbd 0,#c0c0c0 2px,#dcdcdc 2.5px,#dcdcdc 3.5px,#8e8e8e 3.5px)"></div>
</body></html>
